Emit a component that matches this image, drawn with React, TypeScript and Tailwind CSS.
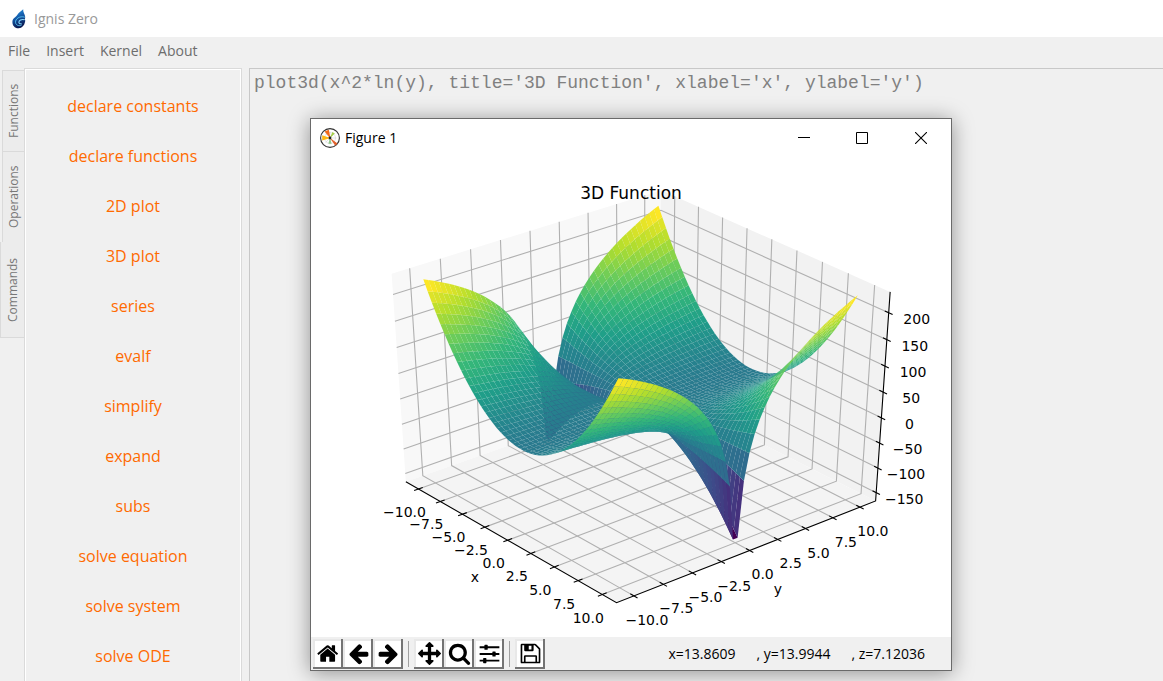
import type { ReactNode } from "react"

type Point = [number, number]
type Vec3 = [number, number, number]

const COMMANDS = [
  "declare constants", "declare functions", "2D plot", "3D plot", "series", "evalf", "simplify",
  "expand", "subs", "solve equation", "solve system", "solve ODE",
]

const VIRIDIS = [
  [68, 1, 84], [72, 40, 120], [62, 74, 137], [49, 104, 142], [38, 130, 142],
  [31, 158, 137], [53, 183, 121], [109, 205, 89], [180, 222, 44], [253, 231, 37],
]

// Axis limits and camera of the 3D view
const EDGE = 11.458
const Z_MIN = -167.1
const Z_MAX = 238.4
const HALF = 0.5208
const DISTANCE = 10
const AZIMUTH = -0.6937
const ELEVATION = 0.6072
const SCALE_X = 329.75
const SCALE_Y = 243.53
const CENTER_X = 328.47
const CENTER_Y = 233.14
const SAMPLES = 50

// Rotates a data point into view space: right, up, towards the camera
function toView([x, y, z]: Vec3): Vec3 {
  const wx = (x / EDGE) * HALF
  const wy = (y / EDGE) * HALF
  const wz = ((2 * z - Z_MIN - Z_MAX) / (Z_MAX - Z_MIN)) * HALF
  const forward = Math.cos(AZIMUTH) * wx + Math.sin(AZIMUTH) * wy
  return [
    Math.cos(AZIMUTH) * wy - Math.sin(AZIMUTH) * wx,
    wz * Math.cos(ELEVATION) - forward * Math.sin(ELEVATION),
    forward * Math.cos(ELEVATION) + wz * Math.sin(ELEVATION),
  ]
}

function project(v: Vec3): Point {
  const [right, up, near] = toView(v)
  const scale = DISTANCE / (DISTANCE - near)
  return [CENTER_X + right * scale * SCALE_X, CENTER_Y - up * scale * SCALE_Y]
}

function toPoints(corners: Vec3[]) {
  return corners.map((c) => project(c).map((n) => n.toFixed(2)).join(",")).join(" ")
}

function viridis(t: number) {
  const pos = Math.min(Math.max(t, 0), 1) * (VIRIDIS.length - 1)
  const i = Math.min(Math.floor(pos), VIRIDIS.length - 2)
  const rgb = VIRIDIS[i].map((c, k) => Math.round(c + (VIRIDIS[i + 1][k] - c) * (pos - i)))
  return `rgb(${rgb.join(",")})`
}

function buildSurface() {
  const at = (i: number) => -10 + (20 * i) / (SAMPLES - 1)
  const corner = (i: number, j: number): Vec3 => [at(i), at(j), at(i) ** 2 * Math.log(Math.abs(at(j)))]
  const faces = []
  for (let i = 0; i < SAMPLES - 1; i++) {
    for (let j = 0; j < SAMPLES - 1; j++) {
      const corners = [corner(i, j), corner(i + 1, j), corner(i + 1, j + 1), corner(i, j + 1)]
      const mean = corners.reduce((sum, c) => sum + c[2], 0) / 4
      const near = corners.reduce((sum, c) => sum + toView(c)[2], 0) / 4
      faces.push({ points: toPoints(corners), mean, near })
    }
  }
  const low = Math.min(...faces.map((f) => f.mean))
  const high = Math.max(...faces.map((f) => f.mean))
  // Far faces first, so that near ones are painted over them
  return faces
    .sort((a, b) => a.near - b.near)
    .map((f) => ({ points: f.points, fill: viridis((f.mean - low) / (high - low)) }))
}

const SURFACE = buildSurface()
const XY_TICKS = [-10, -7.5, -5, -2.5, 0, 2.5, 5, 7.5, 10]
const Z_TICKS = [-150, -100, -50, 0, 50, 100, 150, 200]

function tickText(value: number, digits: number) {
  return value.toFixed(digits).replace("-", "\u2212")
}

interface TickProps {
  at: Vec3
  inner: Vec3
  outer: Vec3
  dx: number
  dy: number
  label: string
}

function Tick({ at, inner, outer, dx, dy, label }: TickProps) {
  const [x, y] = project(at)
  return (
    <g>
      <polyline points={toPoints([inner, outer])} stroke="#000" strokeWidth="1.1" />
      <text x={x + dx} y={y + dy + 5} textAnchor="middle">{label}</text>
    </g>
  )
}

function Plot() {
  return (
    <svg viewBox="0 0 640 480" className="block w-full font-['DejaVu_Sans',sans-serif] text-[14px]" role="img" aria-label="3D Function">
      {/* Panes */}
      <polygon fill="#f8f8f8" points={toPoints([[-EDGE, -EDGE, Z_MIN], [-EDGE, EDGE, Z_MIN], [-EDGE, EDGE, Z_MAX], [-EDGE, -EDGE, Z_MAX]])} />
      <polygon fill="#f2f2f2" points={toPoints([[-EDGE, EDGE, Z_MIN], [EDGE, EDGE, Z_MIN], [EDGE, EDGE, Z_MAX], [-EDGE, EDGE, Z_MAX]])} />
      <polygon fill="#f4f4f4" points={toPoints([[-EDGE, -EDGE, Z_MIN], [EDGE, -EDGE, Z_MIN], [EDGE, EDGE, Z_MIN], [-EDGE, EDGE, Z_MIN]])} />

      {/* Grid */}
      <g fill="none" stroke="#b0b0b0" strokeWidth="1.1">
        {XY_TICKS.map((t) => (
          <g key={t}>
            <polyline points={toPoints([[t, -EDGE, Z_MIN], [t, EDGE, Z_MIN], [t, EDGE, Z_MAX]])} />
            <polyline points={toPoints([[EDGE, t, Z_MIN], [-EDGE, t, Z_MIN], [-EDGE, t, Z_MAX]])} />
          </g>
        ))}
        {Z_TICKS.map((t) => (
          <polyline key={t} points={toPoints([[-EDGE, -EDGE, t], [-EDGE, EDGE, t], [EDGE, EDGE, t]])} />
        ))}
      </g>

      {/* Axes */}
      <polyline
        fill="none"
        stroke="#000"
        strokeWidth="1.1"
        points={toPoints([[-EDGE, -EDGE, Z_MIN], [EDGE, -EDGE, Z_MIN], [EDGE, EDGE, Z_MIN], [EDGE, EDGE, Z_MAX]])}
      />
      {XY_TICKS.map((t) => (
        <g key={t}>
          <Tick at={[t, -EDGE, Z_MIN]} inner={[t, -EDGE + 0.37, Z_MIN]} outer={[t, -EDGE - 0.37, Z_MIN]} dx={-14} dy={23} label={tickText(t, 1)} />
          <Tick at={[EDGE, t, Z_MIN]} inner={[EDGE - 0.37, t, Z_MIN]} outer={[EDGE + 0.37, t, Z_MIN]} dx={13} dy={24} label={tickText(t, 1)} />
        </g>
      ))}
      {Z_TICKS.map((t) => (
        <Tick key={t} at={[EDGE, EDGE, t]} inner={[EDGE - 0.37, EDGE, t]} outer={[EDGE + 0.37, EDGE, t]} dx={28} dy={6} label={tickText(t, 0)} />
      ))}

      {SURFACE.map((face, i) => (
        <polygon key={i} points={face.points} fill={face.fill} />
      ))}

      <text x="164" y="425" textAnchor="middle">x</text>
      <text x="467" y="437" textAnchor="middle">y</text>
      <text x="320" y="42" textAnchor="middle" className="text-[17px]">3D Function</text>
    </svg>
  )
}

function AppLogo() {
  return (
    <svg viewBox="0 0 14 20" className="h-5 w-3.5">
      <defs>
        <linearGradient id="flame" x1="0" y1="0" x2="0.3" y2="1">
          <stop offset="0" stopColor="#2aa0e8" />
          <stop offset="0.45" stopColor="#1560b0" />
          <stop offset="1" stopColor="#0a1a52" />
        </linearGradient>
      </defs>
      <path d="M11.200 0.300C10.800 3.400 13 5 13.200 8c0.100 1.200-0.200 2-0.700 2.800 0.800 0 0.900 0.800 0.500 2.200-0.700 3.500-2.800 6-6.300 6.300C2.800 19.500 0.200 16.500 0.400 12.800 0.600 8.800 3.200 9 5.200 6 7 3.400 8.600 2.500 11.200 0.300z" fill="url(#flame)" />
      <path d="M12.800 8.200C7.500 6.600 3.300 10 3.500 13.300c0.200 3 3.800 4.400 6.300 2.500" fill="none" stroke="#58c4f4" strokeWidth="0.900" />
      <path d="M12.500 10.800c-3-1-5.800 0.600-5.600 2.700 0.100 1.200 1.500 1.600 2.600 1" fill="none" stroke="#8adcff" strokeWidth="1.100" />
    </svg>
  )
}

function FigureLogo() {
  return (
    <svg viewBox="0 0 20 20" className="size-5">
      <circle cx="10" cy="10" r="9.400" fill="#fff" stroke="#333" strokeWidth="1.100" />
      <circle cx="10" cy="10" r="5.500" fill="none" stroke="#ccc" strokeWidth="0.500" />
      <path d="M3.500 10h13M10 3.500v13M5.500 5.500l9 9M14.500 5.500l-9 9" stroke="#ccc" strokeWidth="0.500" />
      <path d="M10.500 10.500L4.500 3.600 8.800 1.800z" fill="#f26a1b" />
      <path d="M10.500 10L2.200 12.400V7.200z" fill="#fdb813" />
      <path d="M9.500 9.500L17.500 15.600 15.300 17.800z" fill="#e0602a" />
      <path d="M9.800 10.200L12.400 4l2.400 1.400z" fill="#a5cf4a" />
      <path d="M10 9.500l1.600 6.200-3.200 0.100z" fill="#8fc98a" />
      <circle cx="10" cy="10" r="1.400" fill="#222" />
    </svg>
  )
}

const ARROW = "M1664 896v128q0 53-32.5 90.5t-84.5 37.5h-704l293 294q38 36 38 90t-38 90l-75 76q-37 37-90 37-52 0-91-37l-651-652q-37-37-37-90 0-52 37-91l651-650q38-38 91-38 52 0 90 38l75 74q38 38 38 91t-38 91l-293 293h704q52 0 84.5 37.5t32.5 90.5z"

const ICONS: Record<string, ReactNode> = {
  Home: <path d="M1408 992v480q0 26-19 45t-45 19h-384v-384h-256v384h-384q-26 0-45-19t-19-45v-480q0-1 .5-3t.5-3l575-474 575 474q1 2 1 6zm223-69l-62 74q-8 9-21 11h-3q-13 0-21-7l-692-577-692 577q-12 8-24 7-13-2-21-11l-62-74q-8-10-7-23.5t11-21.5l719-599q32-26 76-26t76 26l244 204v-195q0-14 9-23t23-9h192q14 0 23 9t9 23v408l219 182q10 8 11 21.5t-7 23.5z" />,
  Back: <path d={ARROW} />,
  Forward: <path transform="matrix(-1 0 0 1 1792 0)" d={ARROW} />,
  Pan: <path d="M1792 896q0 26-19 45l-256 256q-19 19-45 19t-45-19-19-45v-128h-384v384h128q26 0 45 19t19 45-19 45l-256 256q-19 19-45 19t-45-19l-256-256q-19-19-19-45t19-45 45-19h128v-384h-384v128q0 26-19 45t-45 19-45-19l-256-256q-19-19-19-45t19-45l256-256q19-19 45-19t45 19 19 45v128h384v-384h-128q-26 0-45-19t-19-45 19-45l256-256q19-19 45-19t45 19l256 256q19 19 19 45t-19 45-45 19h-128v384h384v-128q0-26 19-45t45-19 45 19l256 256q19 19 19 45z" />,
  Zoom: <path d="M1216 832q0-185-131.5-316.5t-316.5-131.5-316.5 131.5-131.5 316.5 131.5 316.5 316.5 131.5 316.5-131.5 131.5-316.5zm512 832q0 52-38 90t-90 38q-54 0-90-38l-343-342q-179 124-399 124-143 0-273.5-55.5t-225-150-150-225-55.5-273.5 55.5-273.5 150-225 225-150 273.5-55.5 273.5 55.5 225 150 150 225 55.5 273.5q0 220-124 399l343 343q37 37 37 90z" />,
  Subplots: <path d="M128 340h1536v144H128zM128 860h1536v144H128zM128 1380h1536v144H128zM500 260q0-48 48-48h160q48 0 48 48v304q0 48-48 48H548q-48 0-48-48zM1120 780q0-48 48-48h160q48 0 48 48v304q0 48-48 48h-160q-48 0-48-48zM400 1300q0-48 48-48h160q48 0 48 48v304q0 48-48 48H448q-48 0-48-48z" />,
  Save: <path fillRule="evenodd" d="M224 128h1020q50 0 90 40l290 290q40 40 40 90v1020q0 96-96 96H224q-96 0-96-96V224q0-96 96-96zM256 256v1280h128v-416q0-96 96-96h832q96 0 96 96v416h128V570L1230 256h-90v370q0 96-96 96H500q-96 0-96-96V256zM512 1152v384h768v-384zM760 290v290h210V290z" />,
}

function ToolButton({ name }: { name: string }) {
  return (
    <button
      aria-label={name}
      className="flex size-[30px] items-center justify-center border-r-2 border-b-2 border-[#747474] bg-white pt-0.5 pl-0.5 shadow-[inset_2px_2px_0_#e8e8e8]"
    >
      <svg viewBox="0 0 1792 1792" className="size-[23px]" fill="#000">{ICONS[name]}</svg>
    </button>
  )
}

function Figure() {
  return (
    <section className="absolute top-[49px] left-[60px] w-[642px] border border-[#6a6a6a] bg-white font-['Open_Sans',sans-serif] shadow-[0_2px_20px_rgba(0,0,0,0.4)]">
      <header className="flex h-[38px] items-center pl-[9px]">
        <FigureLogo />
        <h2 className="ml-[5px] grow text-sm text-black">Figure 1</h2>
        <button aria-label="Minimize" className="grid h-full w-[58px] place-items-center">
          <svg viewBox="0 0 12 12" className="size-3"><path d="M0 5.500h12" stroke="#000" /></svg>
        </button>
        <button aria-label="Maximize" className="grid h-full w-[58px] place-items-center">
          <svg viewBox="0 0 12 12" className="size-3"><path d="M.5.5h11v11H.5z" fill="none" stroke="#000" /></svg>
        </button>
        <button aria-label="Close" className="grid h-full w-[60px] place-items-center">
          <svg viewBox="0 0 12 12" className="size-3"><path d="M0 0l12 12M12 0L0 12" stroke="#000" strokeWidth="1.100" /></svg>
        </button>
      </header>
      <Plot />
      <footer className="flex h-[33px] items-center bg-[#f0f0f0] px-0.5 text-sm text-black">
        <ToolButton name="Home" />
        <ToolButton name="Back" />
        <ToolButton name="Forward" />
        <span className="mx-[5px] h-[26px] w-px bg-[#a0a0a0]" />
        <ToolButton name="Pan" />
        <ToolButton name="Zoom" />
        <ToolButton name="Subplots" />
        <span className="mx-[5px] h-[26px] w-px bg-[#a0a0a0]" />
        <ToolButton name="Save" />
        <p className="ml-auto flex gap-[21px] pr-6">
          <span>x=13.8609</span>
          <span>, y=13.9944</span>
          <span>, z=7.12036</span>
        </p>
      </footer>
    </section>
  )
}

export default function App() {
  return (
    <div className="flex h-screen flex-col overflow-hidden bg-[#f0f0f0] font-['Open_Sans',sans-serif]">
      <header className="flex h-[37px] shrink-0 items-center gap-2 bg-white pl-3 text-sm text-[#999]">
        <AppLogo />
        <h1>Ignis Zero</h1>
      </header>
      <nav className="flex h-[31px] shrink-0 items-center gap-4 px-2 pb-1 text-sm text-[#6d6d6d]">
        <button>File</button>
        <button>Insert</button>
        <button>Kernel</button>
        <button>About</button>
      </nav>
      <main className="flex min-h-0 grow">
        <div role="tablist" className="flex w-6 shrink-0 flex-col items-end pt-0.5 text-xs text-[#777]">
          <button role="tab" className="h-[82px] w-[22px] rotate-180 border-t border-r border-b border-[#dadada] bg-[#ececec] [writing-mode:vertical-rl]">Functions</button>
          <button role="tab" className="h-[90px] w-[22px] rotate-180 border-r border-[#dadada] bg-[#ececec] [writing-mode:vertical-rl]">Operations</button>
          <button role="tab" aria-selected="true" className="h-[96px] w-6 rotate-180 border-t border-r border-[#dadada] bg-[#ececec] [writing-mode:vertical-rl]">Commands</button>
        </div>
        <div className="flex w-[218px] shrink-0 flex-col overflow-hidden border-x border-t border-[#dadada] text-base text-[#ff6a00] shadow-[inset_1px_1px_0_#fff,inset_-1px_0_0_#fff]">
          <div className="flex flex-col pt-3">
            {COMMANDS.map((name) => (
              <button key={name} className="h-[50px] shrink-0">{name}</button>
            ))}
          </div>
        </div>
        <div className="relative ml-[7px] min-w-0 grow border-t border-l border-[#c8c8c8]">
          <textarea
            aria-label="Input"
            readOnly
            spellCheck={false}
            defaultValue="plot3d(x^2*ln(y), title='3D Function', xlabel='x', ylabel='y')"
            className="block size-full resize-none bg-transparent px-1 py-0.5 font-['Liberation_Mono',monospace] text-lg leading-6 text-[#808080] outline-none"
          />
          <Figure />
        </div>
      </main>
    </div>
  )
}
